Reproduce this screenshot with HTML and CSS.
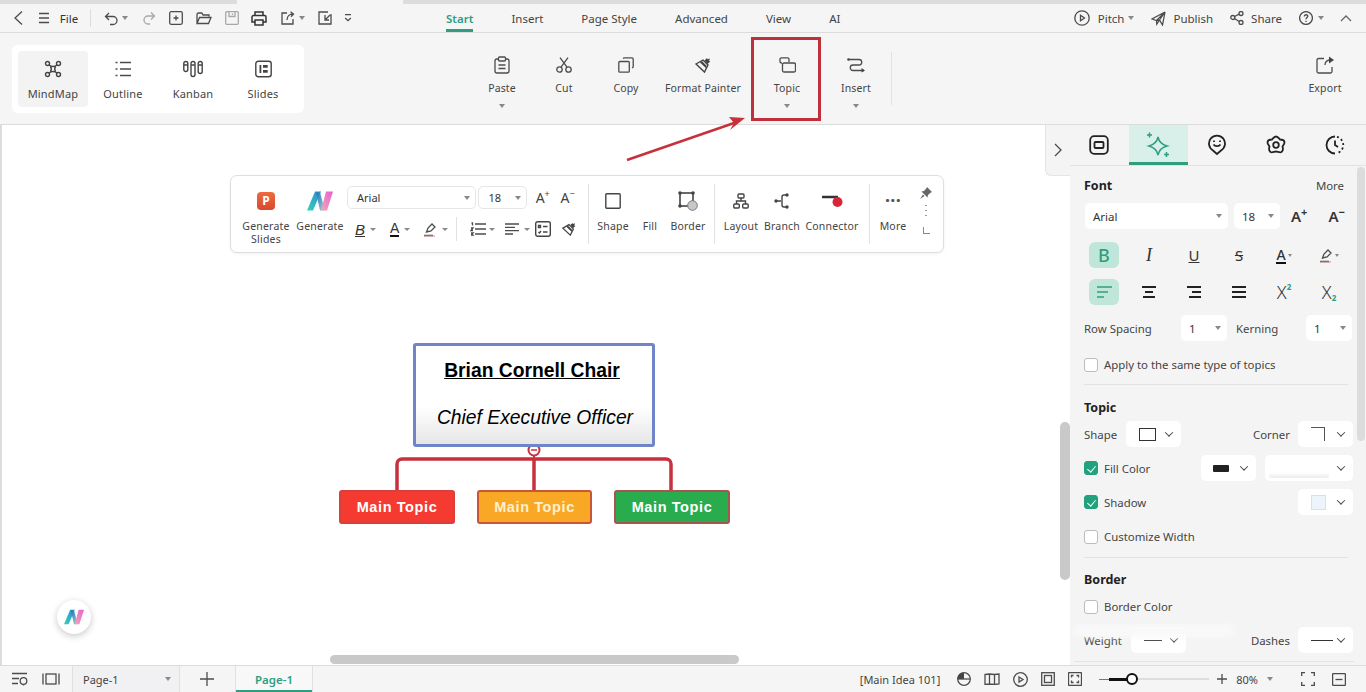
FILE: index.html
```html
<!DOCTYPE html>
<html lang="en">
<head>
<meta charset="utf-8">
<title>MindMap editor</title>
<link rel="stylesheet" href="styles.css">
</head>
<body>
<div class="app">
  <div class="tabstrip"></div>
  <header class="titlebar">
    <div class="quick">
      <svg class="ico" width="14" height="16" viewBox="0 0 14 16"><path d="M10 1.500 3 8l7 6.500"/></svg>
      <svg class="ico" width="14" height="14" viewBox="0 0 14 14"><path d="M2 2.500h10M2 7h10M2 11.500h10"/></svg>
      <span class="quick-text">File</span>
      <span class="vsep"></span>
      <span class="with-caret"><svg class="ico" width="15" height="15" viewBox="0 0 15 15"><path d="M5 2 1.500 5.500 5 9M1.500 5.500H9a4 4 0 0 1 0 8H6"/></svg><i class="caret"></i></span>
      <svg class="ico light" width="14" height="14" viewBox="0 0 14 14"><path d="M9 1.500 12.500 5 9 8.500M12.500 5H6a4 4 0 0 0 0 8h2"/></svg>
      <svg class="ico" width="14" height="14" viewBox="0 0 14 14"><rect x=".7" y=".7" width="12.600" height="12.600" rx="1.500"/><path d="M7 4.500v5M4.500 7h5"/></svg>
      <svg class="ico" width="16" height="13" viewBox="0 0 16 13"><path d="M1 11V2.500A1.500 1.500 0 0 1 2.500 1h3.200l1.500 2H13v1.500M1 11.500h11.500l2.500-6H3.500z"/></svg>
      <svg class="ico light" width="14" height="14" viewBox="0 0 14 14"><rect x=".7" y=".7" width="12.600" height="12.600" rx="1"/><path d="M4 1v4.500h6V1M7.500 2.500v1.500"/></svg>
      <svg class="ico thick" width="16" height="15" viewBox="0 0 16 15"><path d="M4 4.500V1h8v3.500M4 11H1V6a1.500 1.500 0 0 1 1.500-1.500h11A1.500 1.500 0 0 1 15 6v5h-3"/><rect x="4" y="9" width="8" height="5"/></svg>
      <span class="with-caret"><svg class="ico" width="15" height="14" viewBox="0 0 15 14"><path d="M6 2H1v11h11V8M6 9c0-4 3-6 6-6M9.500 .7 12.500 3 10 5.800"/></svg><i class="caret"></i></span>
      <svg class="ico" width="14" height="14" viewBox="0 0 14 14"><path d="M13 3v10H1V1h9M7 4v5h4M7 9l5-5"/></svg>
      <svg class="ico" width="8" height="8" viewBox="0 0 8 8"><path d="M1 .7h6M1.200 4 4 6.700 6.800 4"/></svg>
    </div>
    <nav class="menu">
      <span class="menu-item is-active">Start</span>
      <span class="menu-item">Insert</span>
      <span class="menu-item">Page Style</span>
      <span class="menu-item">Advanced</span>
      <span class="menu-item">View</span>
      <span class="menu-item">AI</span>
    </nav>
    <div class="actions">
      <span class="action action-pitch">
        <svg class="ico" width="16" height="16" viewBox="0 0 16 16"><circle cx="8" cy="8" r="7.200"/><path d="m6.500 5.200 4 2.800-4 2.800z"/></svg>
        <span>Pitch</span><i class="caret"></i>
      </span>
      <span class="action">
        <svg class="ico" width="15" height="15" viewBox="0 0 15 15"><path d="M14 1 1 8l4.500 1.500zM14 1l-2.500 13-3-5L5.500 9.500 5.800 13l2.700-4M14 1 8.500 9"/></svg>
        <span>Publish</span>
      </span>
      <span class="action">
        <svg class="ico" width="14" height="14" viewBox="0 0 14 14"><circle cx="2.800" cy="6.500" r="2"/><circle cx="11" cy="2.500" r="2"/><circle cx="11" cy="11.500" r="2"/><path d="m4.600 5.500 4.500-2.300M4.600 7.500l4.500 3"/></svg>
        <span>Share</span>
      </span>
      <span class="action">
        <svg class="ico" width="14" height="14" viewBox="0 0 14 14"><circle cx="7" cy="7" r="6.400"/><path d="M5.300 5.500C5.300 3.200 8.800 3.200 8.800 5.300 8.800 6.500 7 6.700 7 8.300M7 9.700v1.200"/></svg>
        <i class="caret"></i>
      </span>
      <svg class="ico up" width="12" height="7" viewBox="0 0 12 7"><path d="M1 6 6 1l5 5"/></svg>
    </div>
  </header>

  <section class="ribbon">
    <div class="views">
      <div class="view is-selected">
        <svg class="ico dark" width="18" height="18" viewBox="0 0 18 18"><circle cx="3.500" cy="3.500" r="2"/><circle cx="14.500" cy="3.500" r="2"/><circle cx="3.500" cy="14.500" r="2"/><circle cx="14.500" cy="14.500" r="2"/><path d="M5 5c1.500 1.500 2 1.500 4 1.500S11.500 6.500 13 5M5 13c1.500-1.500 2-1.500 4-1.500s2.500 0 4 1.500M6.500 6.500c1 1.500 1 3.500 0 5M11.500 6.500c-1 1.500-1 3.500 0 5"/></svg>
        <span>MindMap</span>
      </div>
      <div class="view">
        <svg class="ico" width="16" height="16" viewBox="0 0 16 16"><path d="M.5 1.500h2M5 1.500h11M.5 8h2M5 8h11M.5 14.500h2M5 14.500h11"/></svg>
        <span>Outline</span>
      </div>
      <div class="view">
        <svg class="ico dark" width="20" height="17" viewBox="0 0 20 17"><rect x=".8" y="1" width="4" height="10" rx="2"/><rect x="8" y="1" width="4" height="15" rx="2"/><rect x="15.200" y="1" width="4" height="12" rx="2"/><path d="M1 4.500h3.500M8.200 4.500h3.500M15.400 4.500h3.500"/></svg>
        <span>Kanban</span>
      </div>
      <div class="view">
        <svg class="ico dark" width="17" height="17" viewBox="0 0 17 17"><rect x=".8" y=".8" width="15.400" height="15.400" rx="2.500"/><path class="fill" d="M4.500 4.500h1.800v8H4.500zM8 4.500h4.700v2.800H8zM8 9.500h4.700v2.800H8z"/></svg>
        <span>Slides</span>
      </div>
    </div>
    <div class="commands">
      <div class="cmd"><svg class="ico" width="16" height="18" viewBox="0 0 16 18"><path d="M4.500 3H3a2 2 0 0 0-2 2v10a2 2 0 0 0 2 2h10a2 2 0 0 0 2-2V5a2 2 0 0 0-2-2h-1.500"/><rect x="4.500" y="1" width="7" height="4" rx="1"/><path d="M4.500 9h7M4.500 12.500h7"/></svg><span>Paste</span><i class="caret"></i></div>
      <div class="cmd"><svg class="ico" width="16" height="16" viewBox="0 0 16 16"><circle cx="3.500" cy="12.500" r="2.700"/><circle cx="12.500" cy="12.500" r="2.700"/><path d="m5 10.200L12 .7M11 10.200 4 .7"/></svg><span>Cut</span></div>
      <div class="cmd"><svg class="ico" width="16" height="16" viewBox="0 0 16 16"><rect x=".8" y="4.500" width="10.500" height="10.700" rx="1"/><path d="M5 1.500 6 .8h8a1.200 1.200 0 0 1 1.200 1.200v8l-1 1.200"/></svg><span>Copy</span></div>
      <div class="cmd cmd-wide"><svg class="ico dark" width="16" height="16" viewBox="0 0 16 16"><path class="fill" d="M9.500 3.500 12 1l.5 1.200L15 1.500 14 4l1.300.5-2.800 2.500z"/><path d="m1 7 7-4 5 5-3.500 7z"/><path class="fill" d="m5 5.500 1.800-1.500 5 5-1 2z"/></svg><span>Format Painter</span></div>
      <div class="cmd cmd-topic"><svg class="ico" width="17" height="16" viewBox="0 0 17 16"><path d="M3 6H2.300A1.500 1.500 0 0 1 1 4.500V2.300A1.500 1.500 0 0 1 2.500.8h6A1.500 1.500 0 0 1 10 2.300V5"/><rect x="3.500" y="6" width="13" height="9" rx="1.500"/></svg><span>Topic</span><i class="caret"></i></div>
      <div class="cmd"><svg class="ico" width="18" height="15" viewBox="0 0 18 15"><path d="M2 2h10a2.500 2.500 0 0 1 0 5.500H6A2.500 2.500 0 0 0 6 13h11"/><circle class="fill" cx="1.500" cy="2" r="1.300"/><path class="fill" d="m14.500 10.500 3.500 2.500-3.500 2z"/></svg><span>Insert</span><i class="caret"></i></div>
      <span class="rib-sep"></span>
    </div>
    <div class="cmd cmd-export"><svg class="ico" width="18" height="18" viewBox="0 0 18 18"><path d="M8 2.500H2.500A1.500 1.500 0 0 0 1 4v11.500A1.500 1.500 0 0 0 2.500 17h12a1.500 1.500 0 0 0 1.500-1.500V11"/><path d="M9 9c0-3.500 3-5 6-5"/><path class="fill" d="M13 .5 18 4l-5 3.500z"/></svg><span>Export</span></div>
  </section>

  <main class="work">
    <div class="canvas">
      <div class="floatbar">
        <div class="fb-tool fb-slides">
          <span class="ppt">P</span>
          <span>Generate<br>Slides</span>
        </div>
        <div class="fb-tool fb-gen">
          <svg width="26" height="19" viewBox="0 0 26 19"><defs><linearGradient id="g1" x1="0" y1="1" x2="1" y2="0"><stop offset="0" stop-color="#36d0bf"/><stop offset="1" stop-color="#2a8fc9"/></linearGradient><linearGradient id="g2" x1="0" y1="0" x2="1" y2="1"><stop offset="0" stop-color="#1f6fb8"/><stop offset="1" stop-color="#a7dcd0"/></linearGradient><linearGradient id="g3" x1="0" y1="1" x2="1" y2="0"><stop offset="0" stop-color="#f3a8b8"/><stop offset="1" stop-color="#e85fd0"/></linearGradient></defs><path fill="url(#g1)" d="M0 19 8 0h6L6 19z"/><path fill="url(#g2)" d="M9 1h4l5 18h-5z"/><path fill="url(#g3)" d="M14 19 19 0h7l-6 19z"/></svg>
          <span>Generate</span>
        </div>
        <div class="fb-format">
          <div class="fb-line">
            <span class="sel sel-font"><span>Arial</span><i class="caret"></i></span>
            <span class="sel sel-size"><span>18</span><i class="caret"></i></span>
            <span class="grow-a">A<sup>+</sup></span>
            <span class="grow-a">A<sup>−</sup></span>
          </div>
          <div class="fb-line fb-line2">
            <span class="fmt fmt-b"><b class="b-ital">B</b><i class="caret"></i></span>
            <span class="fmt fmt-a"><u class="a-under">A</u><i class="caret"></i></span>
            <span class="fmt fmt-h"><svg class="ico" width="14" height="15" viewBox="0 0 14 15"><path d="M3.500 10 5 6l4-4 3 3-4 4zM1 13.500h9"/><path class="red" d="M1 14h11"/></svg><i class="caret"></i></span>
            <span class="mini-sep"></span>
            <span class="fmt fmt-l"><svg class="ico" width="16" height="14" viewBox="0 0 16 14"><path d="M5 2h11M5 7h11M5 12h11M1.500 1h1v2.500M1 6h2l-2 2.500h2M1 11h2l-1 1 1 1H1"/></svg><i class="caret"></i></span>
            <span class="fmt fmt-al"><svg class="ico" width="14" height="12" viewBox="0 0 14 12"><path d="M0 1h14M0 4.300h10M0 7.600h14M0 11h8"/></svg><i class="caret"></i></span>
            <svg class="ico dark fmt-chk" width="16" height="16" viewBox="0 0 16 16"><rect x=".7" y=".7" width="14.600" height="14.600" rx="2"/><path d="M3.500 4.500h2v2h-2zM8 5.500h4.500M3.500 11l1 1 1.500-2M8 11h4.500"/></svg>
            <svg class="ico dark" width="14" height="14" viewBox="0 0 16 16"><path class="fill" d="M9.500 3.500 12 1l.5 1.200L15 1.500 14 4l1.300.5-2.800 2.500z"/><path d="m1 7 7-4 5 5-3.500 7z"/><path class="fill" d="m5 5.500 1.800-1.500 5 5-1 2z"/></svg>
          </div>
        </div>
        <span class="fb-sep"></span>
        <div class="fb-tool fb-shape"><svg class="ico dark" width="16" height="16" viewBox="0 0 16 16"><rect x=".8" y=".8" width="14.400" height="14.400" rx="1"/></svg><span>Shape</span></div>
        <div class="fb-tool fb-fill"><span class="icon-gap"></span><span>Fill</span></div>
        <div class="fb-tool fb-border"><svg class="border-ico" width="20" height="20" viewBox="0 0 20 20"><rect class="bd" x="2" y="2" width="13" height="13"/><circle class="bdk" cx="2" cy="2" r="1.800"/><circle class="bdk" cx="15" cy="2" r="1.800"/><circle class="bdk" cx="2" cy="15" r="1.800"/><circle class="bdc" cx="14.500" cy="14.500" r="4.800"/></svg><span>Border</span></div>
        <span class="fb-sep fb-sep2"></span>
        <div class="fb-tool fb-layout"><svg class="ico dark" width="16" height="16" viewBox="0 0 16 16"><rect x="5" y="1" width="6" height="4" rx="1"/><rect x=".8" y="11" width="5.500" height="4" rx="1"/><rect x="9.700" y="11" width="5.500" height="4" rx="1"/><path d="M8 5v3M3.500 11V8h9v3"/></svg><span>Layout</span></div>
        <div class="fb-tool fb-branch"><svg class="ico dark" width="16" height="16" viewBox="0 0 16 16"><circle class="fill" cx="2" cy="8" r="1.700"/><circle class="fill" cx="13" cy="2" r="1.700"/><circle class="fill" cx="13" cy="14" r="1.700"/><path d="M2 8h5M13 2h-3a2 2 0 0 0-2 2v8a2 2 0 0 0 2 2h3"/></svg><span>Branch</span></div>
        <div class="fb-tool fb-conn"><svg width="24" height="16" viewBox="0 0 24 16"><path d="M2 4h16" stroke="#333" stroke-width="2.500"/><circle cx="17.500" cy="9" r="5" fill="#d8253a"/></svg><span>Connector</span></div>
        <span class="fb-sep fb-sep3"></span>
        <div class="fb-tool fb-more"><span class="dots">···</span><span>More</span></div>
        <div class="fb-pin">
          <svg width="12" height="12" viewBox="0 0 12 12"><path fill="#666" d="M7 0l5 5-1.500 .7L8 8l-.5 2.500L1.500 4.500 4 4l2.300-2.500zM3 7.500 0 12l4.500-3z"/></svg>
          <span class="pin-dots"></span>
          <span class="pin-corner"></span>
        </div>
      </div>

      <div class="map">
        <svg class="links" width="400" height="60" viewBox="0 0 400 60">
          <path d="M62 57V27a5 5 0 0 1 5-5h264a5 5 0 0 1 5 5v30"/>
          <path d="M199 22v35"/>
          <path class="thin" d="M199 12v10"/>
          <circle cx="199" cy="13" r="5.500"/>
          <path class="minus" d="M196 13h6"/>
        </svg>
        <div class="root">
          <span class="root-name">Brian Cornell Chair</span>
          <span class="root-role">Chief Executive Officer</span>
        </div>
        <div class="topic topic-red">Main Topic</div>
        <div class="topic topic-orange">Main Topic</div>
        <div class="topic topic-green">Main Topic</div>
      </div>

      <div class="ai-btn">
        <svg width="20" height="16" viewBox="0 0 26 19"><path fill="url(#g1)" d="M0 19 8 0h6L6 19z"/><path fill="url(#g2)" d="M9 1h4l5 18h-5z"/><path fill="url(#g3)" d="M14 19 19 0h7l-6 19z"/></svg>
      </div>
      <span class="side-tab"><svg class="ico" width="8" height="14" viewBox="0 0 8 14"><path d="m1 1 6 6-6 6"/></svg></span>
      <span class="scroll-v"></span>
      <span class="scroll-h"></span>
    </div>

    <aside class="panel">
      <div class="panel-tabs">
        <span class="ptab"><svg class="ico black" width="20" height="20" viewBox="0 0 20 20"><rect x="1.200" y="1.200" width="17.600" height="17.600" rx="4"/><rect x="5.500" y="7" width="9" height="6" rx="1"/></svg></span>
        <span class="ptab is-active"><svg class="ico green" width="26" height="26" viewBox="0 0 26 26"><path d="M13 5c1 5 3.500 7.500 9 9-5.500 1.500-8 4-9 9-1-5-3.500-7.500-9-9 5.500-1.500 8-4 9-9z"/><path d="M4.500.5v5M2 3h5M21.500 20v5M19 22.500h5"/></svg></span>
        <span class="ptab"><svg class="ico black" width="18" height="21" viewBox="0 0 18 21"><path d="M9 20 5 16.500A8 8 0 1 1 13 16.500z"/><path d="M6 6.500v1.500M12 6.500v1.500M5.500 10.500c1.500 2.200 5.500 2.200 7 0"/></svg></span>
        <span class="ptab"><svg class="ico black" width="20" height="20" viewBox="0 0 20 20"><path d="M10 1.500C12 1.500 13 3.500 14 4.500 15.500 4.500 18.500 5 18.500 7.500 18.500 9 17 10.500 16.500 11.500 17 13 17.500 15.500 15.500 17 14 18 11.500 16.500 10 16.500 8.500 16.500 6 18 4.500 17 2.500 15.500 3 13 3.500 11.500 3 10.500 1.500 9 1.500 7.500 1.500 5 4.500 4.500 6 4.500 7 3.500 8 1.500 10 1.500z"/><circle cx="10" cy="10" r="2.800"/></svg></span>
        <span class="ptab"><svg class="ico black" width="20" height="20" viewBox="0 0 20 20"><path d="M10 1.500a8.500 8.500 0 1 0 0 17" /><path class="dash" d="M12 1.800a8.500 8.500 0 0 1 0 16.400"/><path d="M10 5.500V10l3 2"/></svg></span>
      </div>
      <div class="panel-body">
        <div class="p-head"><b>Font</b><span>More</span></div>
        <div class="p-row p-fontrow">
          <span class="box box-font"><span>Arial</span><i class="caret"></i></span>
          <span class="box box-size"><span>18</span><i class="caret"></i></span>
          <span class="big-a big-a1">A<sup>+</sup></span>
          <span class="big-a big-a2">A<sup>−</sup></span>
        </div>
        <div class="p-icons">
          <span class="pi is-on pi-bold">B</span>
          <span class="pi pi-ital">I</span>
          <span class="pi pi-under">U</span>
          <span class="pi pi-strike">S</span>
          <span class="pi pi-color"><u>A</u><i class="caret"></i></span>
          <span class="pi"><svg class="ico" width="14" height="15" viewBox="0 0 14 15"><path d="M3.500 10 5 6l4-4 3 3-4 4zM1 13.500h9"/><path class="red" d="M1 14h11"/></svg><i class="caret"></i></span>
        </div>
        <div class="p-icons p-icons2">
          <span class="pi is-on"><svg class="ico green" width="15" height="12" viewBox="0 0 15 12"><path d="M0 1h15M0 6h11M0 11h7"/></svg></span>
          <span class="pi"><svg class="ico black" width="14" height="12" viewBox="0 0 14 12"><path d="M0 1h14M3 6h8M1 11h12"/></svg></span>
          <span class="pi"><svg class="ico black" width="14" height="12" viewBox="0 0 14 12"><path d="M0 1h14M5 6h9M2 11h12"/></svg></span>
          <span class="pi"><svg class="ico black" width="14" height="12" viewBox="0 0 14 12"><path d="M0 1h14M0 6h14M0 11h14"/></svg></span>
          <span class="pi pi-script">X<sup>2</sup></span>
          <span class="pi pi-script">X<sub>2</sub></span>
        </div>
        <div class="p-row p-spacing">
          <span class="lbl lbl-row">Row Spacing</span>
          <span class="box box-num"><span>1</span><i class="caret"></i></span>
          <span class="lbl lbl-kern">Kerning</span>
          <span class="box box-num"><span>1</span><i class="caret"></i></span>
        </div>
        <label class="check-row check-apply"><span class="chk"></span><span>Apply to the same type of topics</span></label>
        <hr class="p-div">
        <div class="p-head p-head2"><b>Topic</b></div>
        <div class="p-row p-shape">
          <span class="lbl">Shape</span>
          <span class="pick pick-shape"><span class="swatch-rect"></span><i class="chev"></i></span>
          <span class="lbl lbl-right">Corner</span>
          <span class="pick pick-end"><span class="swatch-corner"></span><i class="chev"></i></span>
        </div>
        <div class="p-row p-fill">
          <label class="check-row"><span class="chk is-checked"></span><span>Fill Color</span></label>
          <span class="pick pick-black"><span class="swatch-black"></span><i class="chev"></i></span>
          <span class="pick pick-wide"><span class="swatch-white"></span><i class="chev"></i></span>
        </div>
        <div class="p-row p-shadow">
          <label class="check-row"><span class="chk is-checked"></span><span>Shadow</span></label>
          <span class="pick pick-end"><span class="swatch-pale"></span><i class="chev"></i></span>
        </div>
        <label class="check-row check-width"><span class="chk"></span><span>Customize Width</span></label>
        <hr class="p-div p-div2">
        <div class="p-head p-head3"><b>Border</b></div>
        <label class="check-row check-bc"><span class="chk"></span><span>Border Color</span></label>
        <div class="p-row p-weight">
          <span class="lbl">Weight</span>
          <span class="pick pick-weight"><span class="swatch-line"></span><i class="chev"></i></span>
          <span class="lbl lbl-right">Dashes</span>
          <span class="pick pick-end"><span class="swatch-line"></span><i class="chev"></i></span>
        </div>
      </div>
      <span class="panel-scroll"></span>
      <span class="panel-smudge"></span>
      <span class="panel-bottom"></span>
    </aside>
  </main>

  <footer class="status">
    <div class="st-left">
      <svg class="ico" width="17" height="14" viewBox="0 0 17 14"><path d="M1 1.500h15M1 6.500h7M1 11.500h6"/><circle cx="12.500" cy="9" r="3.300"/><path d="M12.500 12.500v1"/></svg>
      <svg class="ico st-pages" width="18" height="12" viewBox="0 0 18 12"><path d="M1 .5v11M17 .5v11"/><rect x="4" y="1" width="10" height="10"/></svg>
      <span class="st-page"><span>Page-1</span><i class="caret"></i></span>
      <svg class="ico st-plus" width="14" height="14" viewBox="0 0 14 14"><path d="M7 0v14M0 7h14"/></svg>
      <span class="st-tab">Page-1</span>
    </div>
    <div class="st-right">
      <span class="st-info">[Main Idea 101]</span>
      <svg class="ico st-i" width="14" height="14" viewBox="0 0 14 14"><circle cx="7" cy="7" r="6.300"/><path class="fill" d="M7 .7A6.300 6.300 0 0 0 .7 7H7z"/><path d="M.7 7h12.600"/></svg>
      <svg class="ico st-i" width="16" height="12" viewBox="0 0 16 12"><path d="M1 1.500 5.500 1l5 .5L15 1v10l-4.500.5-5-.5-4.500.5zM5.500 1v10M10.500 1.500v10"/></svg>
      <svg class="ico st-i" width="15" height="15" viewBox="0 0 15 15"><circle cx="7.500" cy="7.500" r="6.800"/><path d="m6 5 4 2.500L6 10z"/></svg>
      <svg class="ico st-i" width="14" height="14" viewBox="0 0 14 14"><rect x=".7" y=".7" width="12.600" height="12.600"/><rect x="3.500" y="3.500" width="7" height="7"/></svg>
      <svg class="ico st-i" width="14" height="14" viewBox="0 0 14 14"><rect x=".5" y=".5" width="13" height="13" rx="1"/><path d="M3.500 5.500v-2h2M8.500 3.500h2v2M10.500 8.500v2h-2M5.500 10.500h-2v-2"/></svg>
      <span class="zoom-minus"></span>
      <span class="slider"><span class="slider-fill"></span><span class="knob"></span></span>
      <svg class="ico st-zp" width="10" height="10" viewBox="0 0 10 10"><path d="M5 0v10M0 5h10"/></svg>
      <span class="st-zoom">80%</span><i class="caret"></i>
      <svg class="ico st-full" width="14" height="14" viewBox="0 0 14 14"><path d="M.7 4V.7H4M10 .7h3.300V4M13.300 10v3.300H10M4 13.300H.7V10"/></svg>
      <svg class="ico st-fit" width="14" height="13" viewBox="0 0 14 13"><rect x=".6" y=".6" width="12.800" height="11.800" rx="1"/><path d="M3.500 6.500h7"/></svg>
    </div>
  </footer>

  <div class="callout"></div>
  <svg class="arrow" width="130" height="50" viewBox="0 0 130 50"><path d="M2 46 112 8" stroke="#c8303c" stroke-width="2.500" fill="none"/><path d="M120 4 104 3l5 6-4 7z" fill="#c8303c"/></svg>
</div>
</body>
</html>
```

FILE: styles.css
```css
* { box-sizing: border-box; }
html, body { margin: 0; height: 100%; overflow: hidden; }
body { font-family: "Noto Sans", "Open Sans", sans-serif; font-size: 11px; color: #444; background: #fff; }
.app { position: relative; width: 1366px; height: 692px; display: flex; flex-direction: column; }

.ico { fill: none; stroke: #4c4c4c; stroke-width: 1.300; display: block; flex: none; }
.ico.dark { stroke: #444; stroke-width: 1.400; }
.ico.black { stroke: #222; stroke-width: 1.800; }
.ico.green { stroke: #2e9e7f; stroke-width: 1.500; }
.ico.light { stroke: #a8a8a8; }
.ico.thick { stroke: #333; stroke-width: 1.500; }
.ico .fill { fill: #444; stroke: none; }
.ico .red { stroke: #dd8b8b; stroke-width: 1; }
.ico .dash { stroke-dasharray: 2 2.500; }
.caret { display: inline-block; width: 0; height: 0; border-left: 3.500px solid transparent; border-right: 3.500px solid transparent; border-top: 4px solid #888; flex: none; }
.chev { display: block; width: 6px; height: 6px; border-right: 1.500px solid #444; border-bottom: 1.500px solid #444; transform: rotate(45deg) translate(-1px, -1px); flex: none; }

.tabstrip { height: 4px; flex: none; background: linear-gradient(to right, #dcdcdc 237px, #f5f5f5 237px, #f5f5f5 403px, #dcdcdc 403px); }
.titlebar { height: 29px; flex: none; display: flex; align-items: stretch; background: #f5f5f5; border-bottom: 1px solid #dcdcdc; }
.quick { display: grid; grid-template-columns: 22px 28px 22px 20px 32px 34px 20px 36px 20px 34px 34px 30px 16px; margin-left: 8px; align-items: center; justify-items: center; }
.quick-text { font-size: 11.500px; color: #333; }
.vsep { width: 1px; height: 18px; background: #ddd; }
.with-caret { display: flex; align-items: center; gap: 3px; }
.menu { display: flex; gap: 38px; margin-left: 90px; }
.menu-item { display: flex; align-items: center; font-size: 11.500px; color: #444; border-bottom: 3px solid transparent; padding-top: 3px; }
.menu-item.is-active { color: #2e9e7f; font-weight: 600; border-bottom-color: #2e9e7f; }
.actions { display: flex; align-items: center; margin-left: auto; padding-right: 14px; font-size: 11.500px; color: #444; gap: 17px; }
.action { display: flex; align-items: center; gap: 7px; }
.action .caret { margin-left: -2px; }
.action-pitch { gap: 8px; }
.action-pitch .caret { margin-left: -4px; }
.up { stroke: #666; margin-left: -1px; }

.ribbon { height: 92px; flex: none; display: flex; background: #f5f5f5; border-bottom: 1px solid #dcdcdc; padding-top: 12px; }
.views { width: 292px; height: 68px; margin-left: 12px; background: #fff; border-radius: 6px; padding: 6px; display: flex; gap: 0; }
.view { width: 70.500px; height: 56px; display: flex; flex-direction: column; align-items: center; padding-top: 9px; border-radius: 4px; gap: 8px; font-size: 11px; color: #444; letter-spacing: .2px; }
.view svg { height: 18px; }
.view.is-selected { background: #f3f3f3; }
.commands { display: flex; margin-left: 167px; height: 68px; margin-top: -1px; }
.cmd { width: 62px; display: flex; flex-direction: column; align-items: center; font-size: 10.500px; color: #444; letter-spacing: .15px; padding-top: 12px; }
.cmd svg { height: 18px; margin-bottom: 7px; }
.cmd .caret { margin-top: 9px; }
.cmd-wide { width: 92px; }
.cmd-topic { width: 76px; }
.rib-sep { width: 1px; height: 53px; margin: 8px 0 0 4px; background: #e2e2e2; }
.cmd-export { margin-left: auto; margin-right: 10px; margin-top: -1px; height: 68px; }

.work { flex: 1; display: flex; min-height: 0; }
.canvas { position: relative; width: 1070px; background: #fff; border-left: 2px solid #dcdcdc; }
.side-tab { position: absolute; top: 0; right: 0; width: 25px; height: 51px; background: #f4f4f4; border: 1px solid #e4e4e4; border-right: 0; border-top: 0; border-radius: 0 0 0 6px; display: flex; align-items: center; justify-content: center; }
.scroll-v { position: absolute; right: 0; top: 297px; width: 10px; height: 158px; border-radius: 5px; background: #c9c9c9; }
.scroll-h { position: absolute; left: 328px; top: 530px; width: 409px; height: 9px; border-radius: 5px; background: #c9c9c9; }
.ai-btn { position: absolute; left: 55px; top: 475px; width: 34px; height: 34px; border-radius: 50%; background: #fff; box-shadow: 0 2px 7px rgba(0, 0, 0, .22); display: flex; align-items: center; justify-content: center; }

.floatbar { position: absolute; left: 228px; top: 50px; width: 714px; height: 78px; background: #fff; border: 1px solid #dedede; border-radius: 7px; box-shadow: 0 1px 3px rgba(0,0,0,.06); display: flex; align-items: flex-start; }
.fb-tool { display: flex; flex-direction: column; align-items: center; flex: none; font-size: 10.500px; line-height: 13px; color: #444; text-align: center; letter-spacing: .2px; padding-top: 15px; }
.fb-tool svg { height: 20px; margin-bottom: 9px; }
.fb-tool .icon-gap { height: 20px; margin-bottom: 9px; }
.fb-slides { width: 70px; }
.fb-gen { width: 38px; }
.ppt { width: 18px; height: 18px; margin: 1px 0 10px; border-radius: 4px; background: linear-gradient(#ee6a3f, #d94a2c); color: #fff; font-weight: 700; font-size: 12px; line-height: 18px; }
.fb-format { width: 233px; margin-left: 8px; padding-top: 10px; flex: none; }
.fb-line { display: flex; align-items: center; }
.sel { height: 23px; border: 1px solid #e6e6e6; border-radius: 5px; display: flex; align-items: center; justify-content: space-between; padding: 0 5px 0 9px; font-size: 11px; color: #333; }
.sel-font { width: 130px; }
.sel-size { width: 49px; margin-left: 2px; }
.grow-a { font-size: 14px; width: 25px; color: #444; text-align: center; }
.sel + .grow-a { margin-left: 3px; }
.grow-a sup { font-size: 9px; line-height: 0; }
.fb-line2 { margin-top: 7px; height: 26px; }
.fmt { display: flex; align-items: center; gap: 5px; flex: none; }
.fmt .caret { border-left-width: 3px; border-right-width: 3px; border-top-width: 3px; }
.fmt-b { margin-left: 8px; }
.b-ital { font-family: "Liberation Sans", sans-serif; font-weight: 400; font-style: italic; font-size: 15px; text-decoration: underline; color: #333; }
.fmt-a { margin-left: 14px; }
.a-under { font-family: "Liberation Sans", sans-serif; font-size: 14px; text-decoration: none; color: #333; border-bottom: 2.500px solid #111; line-height: 14px; }
.fmt-h { margin-left: 13px; }
.mini-sep { width: 1px; height: 24px; background: #e2e2e2; margin-left: 8px; flex: none; }
.fmt-l { margin-left: 13px; gap: 3px; }
.fmt-al { margin-left: 10px; }
.fmt-chk { margin-left: 5px; margin-right: 11px; }
.fb-sep { width: 1px; height: 60px; margin: 8px 0 0 8px; background: #e2e2e2; flex: none; }
.fb-shape { width: 44px; margin-left: 2px; }
.fb-fill { width: 30px; }
.fb-border { width: 46px; }
.border-ico .bd { fill: none; stroke: #444; stroke-width: 1.600; }
.border-ico .bdk { fill: #444; }
.border-ico .bdc { fill: #c8c8c8; stroke: #777; }
.fb-sep2 { margin-left: 3px; }
.fb-layout { width: 42px; margin-left: 5px; }
.fb-branch { width: 40px; }
.fb-conn { width: 60px; }
.fb-sep3 { margin-left: 7px; }
.fb-more { width: 44px; margin-left: 1px; }
.dots { height: 20px; margin-bottom: 9px; font-size: 18px; line-height: 18px; font-weight: 700; color: #555; }
.fb-pin { margin-left: 3px; padding-top: 11px; display: flex; flex-direction: column; align-items: center; width: 16px; flex: none; }
.pin-dots { width: 2px; height: 14px; margin-top: 4px; background: radial-gradient(circle, #999 1px, transparent 1.100px) 0 0 / 2px 5px; }
.pin-corner { width: 7px; height: 7px; margin-top: 10px; border-left: 1px solid #888; border-bottom: 1px solid #888; }

.map { position: absolute; left: 0; top: 0; width: 100%; height: 100%; pointer-events: none; }
.links { position: absolute; left: 333px; top: 312px; overflow: visible; }
.links path { fill: none; stroke: #c8303f; stroke-width: 3.500; }
.links path.thin { stroke-width: 2; }
.links circle { fill: #fff; stroke: #c8303f; stroke-width: 2; }
.links path.minus { stroke-width: 1.500; }
.root { position: absolute; left: 411px; top: 218px; width: 242px; height: 104px; border: 3px solid #6f85c8; border-radius: 3px; background: linear-gradient(#fff 62%, #e6e6e6); font-family: "Liberation Sans", Arial, sans-serif; color: #000; display: flex; flex-direction: column; align-items: center; }
.root-name { margin-top: 14px; margin-right: 4px; font-size: 19.300px; font-weight: 700; text-decoration: underline; }
.root-role { margin-top: 25px; margin-left: 2px; font-size: 19.300px; font-style: italic; }
.topic { position: absolute; top: 365px; height: 34px; border-radius: 3px; border: 2px solid; font-family: "Liberation Sans", Arial, sans-serif; font-weight: 700; font-size: 14.500px; letter-spacing: .6px; color: #fff; display: flex; align-items: center; justify-content: center; }
.topic-red { left: 337px; width: 116px; background: #f53a32; border-color: #d8403c; }
.topic-orange { left: 475px; width: 115px; background: #f9a825; border-color: #c8573a; color: #fdf0cf; }
.topic-green { left: 612px; width: 116px; background: #28ac4e; border-color: #a85450; }

.panel { position: relative; width: 296px; background: #f4f4f4; display: flex; flex-direction: column; }
.panel-tabs { display: flex; height: 41px; flex: none; border-bottom: 1px solid #e2e2e2; }
.ptab { width: 59px; display: flex; align-items: center; justify-content: center; border-bottom: 3px solid transparent; padding: 2px 1px 0 0; }
.ptab.is-active { background: #d9efe9; border-bottom-color: #2e9e7f; }
.panel-body { padding: 10px 14px 0; font-size: 11.400px; color: #444; }
.panel-scroll { position: absolute; right: 1px; top: 42px; width: 8px; height: 274px; border-radius: 4px; background: #dcdcdc; }
.panel-smudge { position: absolute; left: 4px; top: 500px; width: 160px; height: 12px; background: #f9f9f9; filter: blur(3px); }
.panel-bottom { position: absolute; left: 4px; top: 536px; width: 280px; height: 1px; background: #e4e4e4; }
.p-head { display: flex; justify-content: space-between; height: 18px; align-items: center; padding-right: 4px; margin-right: 4px; }
.p-head b { font-size: 12.500px; color: #222; font-weight: 700; }
.p-row { display: flex; align-items: center; }
.p-fontrow { margin-top: 9px; }
.box { height: 26px; background: #fff; border-radius: 5px; display: flex; align-items: center; justify-content: space-between; padding: 0 6px 0 8px; font-size: 11.500px; color: #333; }
.box-font { width: 143px; margin-left: 1px; }
.box-size { width: 46px; margin-left: 6px; }
.big-a { font-size: 15px; font-weight: 600; color: #333; }
.big-a sup { font-size: 11px; line-height: 0; font-weight: 700; }
.big-a1 { margin-left: 11px; }
.big-a2 { margin-left: 21px; }
.p-icons { display: flex; margin-top: 13px; height: 26px; margin-left: 5px; }
.p-icons2 { margin-top: 11px; }
.pi { width: 30px; height: 26px; margin-right: 15px; border-radius: 6px; display: flex; align-items: center; justify-content: center; gap: 2px; color: #333; font-size: 15px; flex: none; }
.pi .caret { border-left-width: 2.500px; border-right-width: 2.500px; border-top-width: 3px; }
.pi.is-on { background: #c0e6da; }
.pi-bold { color: #2e9e7f; font-weight: 500; font-size: 18px; }
.pi-ital { font-family: "Liberation Serif", serif; font-style: italic; font-size: 18px; }
.pi-under { text-decoration: underline; font-size: 15px; }
.pi-strike { text-decoration: line-through; font-size: 15px; }
.pi-color u { text-decoration: none; font-weight: 500; border-bottom: 2.500px solid #111; line-height: 15px; font-size: 14px; }
.pi-script { font-size: 18px; gap: 0; font-weight: 300; }
.pi-script sup, .pi-script sub { font-size: 8px; color: #2e9e7f; font-weight: 700; line-height: 10px; }
.pi-script sup { align-self: flex-start; margin-top: 3px; }
.pi-script sub { align-self: flex-end; margin-bottom: 2px; }
.p-spacing { margin-top: 10px; }
.lbl { white-space: nowrap; }
.lbl-row { width: 97px; }
.lbl-kern { width: 70px; margin-left: 9px; }
.box-num { width: 46px; }
.check-row { display: flex; align-items: center; gap: 6px; }
.chk { width: 14px; height: 14px; border: 1px solid #bcbcbc; border-radius: 3px; background: #fff; flex: none; position: relative; }
.chk.is-checked { background: #21a17d; border-color: #21a17d; }
.chk.is-checked::after { content: ""; position: absolute; left: 4px; top: 1.500px; width: 4px; height: 7px; border-right: 1.500px solid #fff; border-bottom: 1.500px solid #fff; transform: rotate(40deg); }
.check-apply { margin-top: 16px; }
.p-div { border: 0; height: 1px; background: #e2e2e2; margin: 12px 4px 0 0; }
.p-head2 { margin-top: 13px; }
.pick { height: 26px; background: #fff; border-radius: 5px; display: flex; align-items: center; justify-content: space-between; padding: 0 9px 0 13px; }
.p-shape { margin-top: 5px; }
.pick-shape { width: 55px; margin-left: 9px; }
.lbl-right { margin-left: auto; margin-right: 8px; }
.pick-end { width: 55px; margin-right: 0; }
.p-shape, .p-fill, .p-shadow, .p-weight { padding-right: 0; width: 269px; }
.swatch-rect { width: 17px; height: 13px; border: 1px solid #333; }
.swatch-corner { width: 14px; height: 14px; border-top: 1.500px solid #555; border-right: 1.500px solid #555; }
.p-fill { margin-top: 8px; }
.p-fill .check-row { margin-right: auto; }
.pick-black { width: 55px; padding-left: 12px; }
.swatch-black { width: 16px; height: 7px; background: #222; border-radius: 1px; }
.pick-wide { width: 88px; margin-left: 9px; padding: 0 9px 0 4px; }
.swatch-white { width: 60px; height: 19px; border-radius: 2px; background: linear-gradient(#fff 70%, #ececec); }
.p-shadow { margin-top: 8px; justify-content: space-between; }
.swatch-pale { width: 15px; height: 15px; border: 1px solid #dde; background: #eef4fb; }
.check-width { margin-top: 14px; }
.p-div2 { margin-top: 13px; }
.p-head3 { margin-top: 12px; }
.check-bc { margin-top: 11px; }
.p-weight { margin-top: 13px; }
.pick-weight { width: 55px; margin-left: 9px; }
.swatch-line { width: 22px; height: 1px; background: #333; }
.pick-weight .swatch-line { width: 18px; }

.status { height: 27px; flex: none; background: #f5f5f5; border-top: 1px solid #dcdcdc; display: flex; justify-content: space-between; align-items: stretch; font-size: 11px; color: #444; }
.st-left { display: flex; align-items: center; padding-left: 11px; }
.st-pages { margin-left: 14px; }
.st-page { height: 100%; width: 108px; margin-left: 12px; padding: 0 8px 0 10px; display: flex; align-items: center; justify-content: space-between; background: #f1f1f4; border-left: 1px solid #e0e0e0; border-right: 1px solid #e0e0e0; }
.st-plus { margin-left: 20px; margin-right: 21px; }
.st-tab { height: 100%; width: 78px; display: flex; align-items: center; justify-content: center; color: #2e9e7f; font-size: 11.500px; font-weight: 600; border-left: 1px solid #e0e0e0; border-right: 1px solid #e0e0e0; box-shadow: inset 0 -2px 0 #2e9e7f; background: #f8f8f8; }
.st-right { display: flex; align-items: center; padding-right: 20px; }
.st-info { font-size: 11px; margin-right: 17px; }
.st-i { margin-right: 13px; }
.zoom-minus { width: 10px; height: 1px; background: #777; margin-left: 4px; }
.slider { position: relative; width: 100px; height: 2px; background: #ddd; }
.slider-fill { position: absolute; left: 0; top: -.5px; width: 22px; height: 3px; background: #111; }
.knob { position: absolute; left: 17px; top: -5px; width: 12px; height: 12px; border-radius: 50%; background: #fff; border: 2.500px solid #111; }
.st-zp { margin-left: 8px; }
.st-zoom { margin-left: 9px; margin-right: 9px; }
.st-full { margin-left: 28px; }
.st-fit { margin-left: 17px; }

.callout { position: absolute; left: 751px; top: 37px; width: 70px; height: 84px; border: 3px solid #c0303c; }
.arrow { position: absolute; left: 625px; top: 114px; }
```
